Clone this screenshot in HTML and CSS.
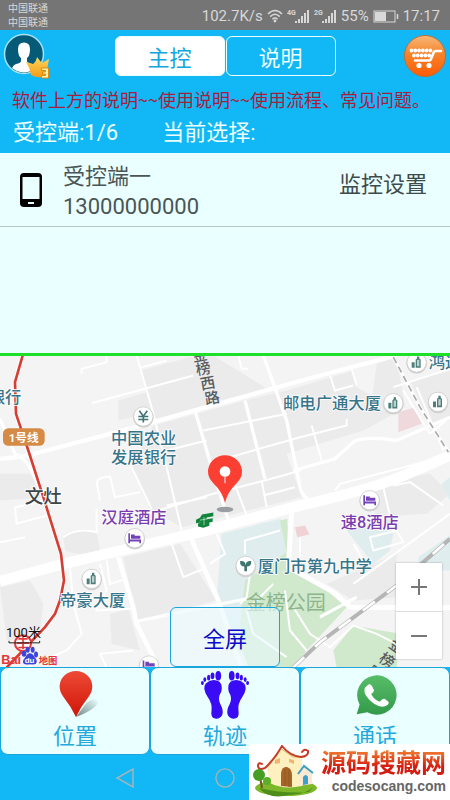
FILE: index.html
```html
<!DOCTYPE html>
<html lang="zh-CN">
<head>
    <meta charset="UTF-8">
    <meta name="viewport" content="width=device-width, initial-scale=1.0">
    <title>主控</title>
    <link rel="stylesheet" href="styles.css">
</head>
<body>
    <div class="status-bar">
        <div class="carriers">
            <span>中国联通</span>
            <span>中国联通</span>
        </div>
        <div class="status-right">
            <span>102.7K/s</span>
            <svg class="wifi" viewBox="0 0 16 14" aria-hidden="true">
                <g fill="none" stroke="#d8d8d8" stroke-width="1.5">
                    <path d="M1 5Q8 -2 15 5"/>
                    <path d="M3.2 7.6Q8 3 12.8 7.6"/>
                    <path d="M5.4 10.2Q8 7.8 10.6 10.2"/>
                </g>
                <circle cx="8" cy="12" r="1.4" fill="#d8d8d8"/>
            </svg>
            <svg class="signal" viewBox="0 0 23 15" aria-hidden="true">
                <text x="0" y="6" class="net-type">4G</text>
                <path fill="#d8d8d8" d="M8 12h2v2H8zM11 10h2v4h-2zM14 7h2v7h-2zM17 4h2v10h-2zM20 1h2v13h-2z"/>
            </svg>
            <svg class="signal" viewBox="0 0 23 15" aria-hidden="true">
                <text x="0" y="6" class="net-type">2G</text>
                <path fill="#d8d8d8" d="M8 12h2v2H8zM11 10h2v4h-2zM14 7h2v7h-2zM17 4h2v10h-2zM20 1h2v13h-2z"/>
            </svg>
            <span>55%</span>
            <svg class="battery" viewBox="0 0 26 13" aria-hidden="true">
                <rect x="1" y="1" width="21" height="11" fill="none" stroke="#d8d8d8"/>
                <rect x="2" y="2" width="11" height="9" fill="#d8d8d8"/>
                <path d="M24.500 4v5" stroke="#d8d8d8" stroke-width="1.500"/>
            </svg>
            <span class="clock">17:17</span>
        </div>
    </div>

    <header class="header">
        <div class="toolbar">
            <button class="icon-btn" aria-label="我的">
                <svg class="avatar" viewBox="0 0 48 48">
                    <defs>
                        <clipPath id="face"><circle cx="21" cy="22" r="18.500"/></clipPath>
                        <linearGradient id="gold" x1="0" y1="0" x2="0" y2="1">
                            <stop offset="0" stop-color="#ffd65a"/>
                            <stop offset="1" stop-color="#f59a16"/>
                        </linearGradient>
                    </defs>
                    <circle cx="21" cy="22" r="19.500" fill="#055a78" stroke="#a5e2f5" stroke-width="1.500"/>
                    <g clip-path="url(#face)" fill="#fff">
                        <path d="M15 17Q15 10.500 21 10.500T27 17Q27 24 24 26V29Q24 31 29 32Q34 34 34 42H8Q8 34 13 32Q18 31 18 29V26Q15 24 15 17Z"/>
                    </g>
                    <path d="M23 30Q27 31 30 32Q33 30 34 25Q37 29 39 31L46 27L43 44Q35 47 28 43Q27 36 23 30Z" fill="url(#gold)"/>
                    <path d="M38.500 36h7v10h-7v-2.500h4v-1.500h-3v-2h3v-1.500h-4z" fill="#fff3b0" stroke="#e08a10"/>
                </svg>
            </button>
            <nav class="tabs">
                <button class="tab active">主控</button>
                <button class="tab">说明</button>
            </nav>
            <button class="icon-btn cart-btn" aria-label="购物车">
                <svg class="cart" viewBox="0 0 44 44">
                    <defs>
                        <linearGradient id="orange" x1="0" y1="0" x2="0" y2="1">
                            <stop offset="0" stop-color="#f8b878"/>
                            <stop offset=".45" stop-color="#f5842a"/>
                            <stop offset="1" stop-color="#ff5a05"/>
                        </linearGradient>
                    </defs>
                    <circle cx="22" cy="22" r="20.500" fill="url(#orange)" stroke="#b8703c"/>
                    <g fill="none" stroke="#fff" stroke-linecap="round">
                        <path d="M38 17H33Q31 17 30.500 19L28 25Q27.500 26.500 26 26.500H12" stroke-width="2.600"/>
                        <path d="M8.500 16.500H28" stroke-width="3.800" stroke-dasharray="0 3.800"/>
                        <path d="M11 21.500H27" stroke-width="3.800" stroke-dasharray="0 3.800"/>
                    </g>
                    <circle cx="16" cy="31.500" r="2.600" fill="#fff"/>
                    <circle cx="26" cy="31.500" r="2.600" fill="#fff"/>
                </svg>
            </button>
        </div>
        <p class="notice">软件上方的说明~~使用说明~~使用流程、常见问题。</p>
        <div class="summary">
            <span>受控端:1/6</span>
            <span>当前选择:</span>
        </div>
    </header>

    <ul class="devices">
        <li class="device">
            <svg class="phone" viewBox="0 0 24 36" aria-hidden="true">
                <rect x="1" y="1" width="22" height="34" rx="4" fill="#000"/>
                <rect x="3.500" y="5" width="17" height="22" fill="#eaffff"/>
                <rect x="9" y="30" width="6" height="2" fill="#eaffff"/>
            </svg>
            <div class="device-info">
                <span>受控端一</span>
                <span>13000000000</span>
            </div>
            <button class="settings">监控设置</button>
        </li>
    </ul>

    <section class="map">
        <svg class="map-canvas" viewBox="0 15 1350 936" preserveAspectRatio="xMidYMid slice">
            <defs>
                <g id="poi">
                    <circle r="31" cy="3" fill="#d2d2d2"/>
                    <circle r="29" fill="#fff" stroke="#c6c6c6" stroke-width="2"/>
                </g>
                <g id="building">
                    <use href="#poi"/>
                    <path fill="#4f7f7b" d="M-15 -1h9v17h-9zM-3 -9l4 -3v-6h7v6l4 3v25H-3z"/>
                    <path fill="#b9d3cf" d="M1 -8h7v19H1z"/>
                </g>
                <g id="hotel">
                    <use href="#poi"/>
                    <path fill="#7343b8" d="M-19 -15h5V4h33v11h-5v-5h-28v5h-5zM-11 -11h11v4h17V2h-28z"/>
                </g>
            </defs>

            <!-- land -->
            <rect y="15" width="1350" height="936" fill="#f4f4f4"/>
            <g fill="#ebebeb">
                <path d="M420 60L590 15H640L810 120L580 185L460 215L440 190L355 210V150L440 125Z"/>
                <path d="M395 350L460 225L735 150L860 120L1060 60L1070 110L1200 180L1090 240L860 310L905 440L545 530L450 475Z"/>
                <path d="M1130 40L1190 20L1215 170L1110 190Z"/>
                <path d="M1230 90L1350 60V200L1290 220Z"/>
                <path d="M370 620L540 580L650 750L410 810Z"/>
                <path d="M190 555Q230 525 290 545L300 600Q240 620 195 600Z"/>
                <path d="M330 790L385 775L420 900L335 880Z"/>
                <path d="M0 710L90 690L130 760L120 850L20 870Z"/>
                <path d="M1090 400L1290 370L1350 430L1280 490L1130 500Z"/>
                <path d="M980 700L1190 610V740L1060 750Z"/>
                <path d="M0 370L90 370L140 440L0 450Z"/>
            </g>
            <path d="M1195 185L1245 170L1265 220L1195 245Z" fill="#f0d9dc"/>
            <path d="M885 530L915 525L928 552L892 560Z" fill="#f0d2d4"/>
            <g fill="#dfedef">
                <path d="M665 550L840 505L870 530L860 610L740 690L720 951H735L650 750Z"/>
                <path d="M1255 620L1350 555V660H1255Z"/>
                <path d="M1040 540L1190 500L1170 600L1120 640Z"/>
                <path d="M1325 400L1350 380V450Z"/>
            </g>
            <g fill="#d0e9cc">
                <path d="M840 510L862 505V650L980 720L1040 770L920 900L880 951H745L715 870L735 690L860 605Z"/>
                <path d="M1000 900L1060 825L1200 850L1190 951H1010Z"/>
            </g>

            <!-- small roads -->
            <g fill="none" stroke="#fff" stroke-width="6">
                <path d="M245 70V55L320 35V15M275 158L580 75M425 50L500 30M410 15L455 170L500 350L545 540M610 240L860 190M500 300L620 270M690 320L900 260L1040 225V205"/>
                <path d="M715 15L725 55L745 55M990 75L1005 120L1060 105M1055 55L1070 105M935 225L965 330"/>
                <path d="M300 450L290 395Q295 380 330 378L345 440L420 425M395 350L455 475M500 465L620 440M440 490L640 430L850 375L900 360"/>
                <path d="M700 390L740 495M785 390L800 470M790 435L885 410M1005 420L1020 400L1290 330M1180 405L1230 395L1330 465"/>
                <path d="M190 560Q230 530 290 545V475M45 470L140 450M45 470L50 520L140 495M0 575L75 560M320 630L330 700L380 685M300 640L320 720L290 780L400 775"/>
                <path d="M515 580L550 680L610 655M650 550L675 610L630 640M210 650L220 760L245 850L200 900L80 951M320 951L300 910L400 900"/>
                <path d="M735 610V570L840 540M750 670L740 740L720 760M820 700L740 780L760 850L860 920M855 720L870 840L920 900M880 770L930 850L990 890L1060 825L1130 850L1190 880"/>
                <path d="M900 560V620M1060 580L1090 630M1110 560L1190 540L1210 575L1120 600ZM1150 410L1180 540M1060 700L1350 490"/>
                <path d="M1210 120L1290 250M1250 110L1330 300M1290 250L1350 200M1180 110L1350 55"/>
            </g>

            <!-- main roads -->
            <g fill="none" stroke="#fff" stroke-linejoin="round">
                <path d="M0 325L70 318L330 250L470 212L600 175L960 75L1190 15" stroke-width="13"/>
                <path d="M0 205L45 310Q85 330 100 370L140 470" stroke-width="9"/>
                <path d="M585 180L635 350L685 510M735 150L795 385M790 15L860 210L900 410Q905 440 940 455" stroke-width="10"/>
                <path d="M880 360L1005 325L1060 275Q1090 255 1190 270L1350 200" stroke-width="10"/>
                <path d="M565 545L655 750L725 951M355 620L400 770L410 820L475 951" stroke-width="14"/>
                <path d="M410 812L740 745M960 800L1070 740" stroke-width="9"/>
                <path d="M875 480L865 650L1000 725L1050 770L1350 772" stroke-width="15"/>
                <path d="M0 692L190 640L600 545L900 465Q1100 420 1200 380L1350 315" stroke-width="32"/>
            </g>

            <!-- railways -->
            <g fill="none">
                <path d="M880 951L960 875L1190 705L1350 565" stroke="#b5b5b5" stroke-width="12"/>
                <path d="M880 951L960 875L1190 705L1350 565" stroke="#fff" stroke-width="8" stroke-dasharray="45 45"/>
                <path d="M1180 20L1260 170L1345 305" stroke="#fff" stroke-width="10"/>
                <path d="M1180 20L1260 170L1345 305" stroke="#aaa" stroke-width="5" stroke-dasharray="20 12"/>
            </g>

            <!-- metro line 1 -->
            <path d="M68 15L45 95L48 190L85 300L130 440L183 610L192 690L180 750L165 790L135 830L20 951" fill="none" stroke="#fff" stroke-width="13"/>
            <path d="M68 15L45 95L48 190L85 300L130 440L183 610L192 690L180 750L165 790L135 830L20 951" fill="none" stroke="#d43f35" stroke-width="8"/>
            <rect x="9" y="233" width="125" height="53" rx="16" fill="#d58a45"/>
            <text x="71" y="273" class="line-name" text-anchor="middle">1号线</text>

            <!-- places -->
            <use href="#poi" x="430" y="198"/>
            <path d="M418 181L430 197L442 181M430 197V216M415 198H445M415 207H445" fill="none" stroke="#3f7672" stroke-width="5"/>
            <use href="#building" x="1250" y="36"/>
            <use href="#building" x="1180" y="158"/>
            <use href="#building" x="1314" y="154"/>
            <use href="#building" x="275" y="685"/>
            <use href="#hotel" x="404" y="563"/>
            <use href="#hotel" x="1109" y="449"/>
            <use href="#hotel" x="447" y="945"/>
            <use href="#poi" x="737" y="646"/>
            <path d="M720 632Q736 630 737 644Q738 630 754 632Q754 648 741 648V662H733V648Q720 648 720 632Z" fill="#3f7672"/>

            <g class="place">
                <text x="-34" y="158">银行</text>
                <text x="333" y="280">中国农业</text>
                <text x="333" y="338">发展银行</text>
                <text x="849" y="175">邮电广通大厦</text>
                <text x="1286" y="53">鸿运</text>
                <text x="180" y="766">帝豪大厦</text>
                <text x="773" y="663">厦门市第九中学</text>
            </g>
            <g class="place hotel-name">
                <text x="304" y="518">汉庭酒店</text>
                <text x="1022" y="532">速8酒店</text>
            </g>
            <text x="74" y="456" class="district">文灶</text>
            <text x="737" y="777" class="park">金榜公园</text>
            <text class="road-name" x="580 590 604 617" y="34 74 118 162" rotate="-10">金榜西路</text>
            <text class="road-name" x="1163 1133 1098" y="888 930 970" rotate="35">金榜路</text>

            <!-- bus stop sign -->
            <path fill="#12853d" d="M606 492L640 486V497L620 501V506L638 503V514L628 516V526L610 532L594 528V519L604 516L588 518V508L600 502Z"/>
            <path d="M600 509L622 505M612 500V524" stroke="#d6ead9" stroke-width="2"/>

            <!-- current position -->
            <ellipse cx="675" cy="477" rx="25" ry="8" fill="#9a9ea3"/>
            <path d="M675 457Q668 425 640 398Q624 382 624 364A51 50 0 0 1 726 364Q726 382 710 398Q682 425 675 457Z" fill="#fb4033"/>
            <circle cx="675" cy="363" r="16" fill="#fff"/>
            <path d="M675 378V398" stroke="#c6cfd2" stroke-width="4"/>

            <!-- scale and provider mark -->
            <circle cx="69" cy="878" r="24" fill="#fff" stroke="#e3383c" stroke-width="6"/>
            <path d="M55 865H83M50 878H88M55 891H83M69 860V896" stroke="#e3383c" stroke-width="5"/>
            <path d="M27 871V877H119V871" fill="none" stroke="#222" stroke-width="3"/>
            <text x="18" y="859" class="scale">100米</text>
            <text x="4" y="941" class="brand">Bai</text>
            <g fill="#3b45dc">
                <ellipse cx="72" cy="910" rx="7" ry="9"/>
                <ellipse cx="83" cy="898" rx="6" ry="9"/>
                <ellipse cx="98" cy="898" rx="6" ry="9"/>
                <ellipse cx="108" cy="912" rx="6" ry="9"/>
                <path d="M90 908Q98 908 104 920Q114 930 108 940Q102 944 90 941Q76 944 70 938Q66 930 76 920Q82 908 90 908Z"/>
            </g>
            <text x="74" y="938" class="brand-du">du</text>
            <text x="116" y="939" class="brand-map">地图</text>
        </svg>

        <button class="fullscreen">全屏</button>
        <div class="zoom">
            <button aria-label="放大">
                <svg viewBox="0 0 18 18"><path d="M9 1V17M1 9H17" stroke="#777" stroke-width="2"/></svg>
            </button>
            <button aria-label="缩小">
                <svg viewBox="0 0 18 18"><path d="M1 9H17" stroke="#777" stroke-width="2"/></svg>
            </button>
        </div>
    </section>

    <div class="actions">
        <button class="action">
            <svg viewBox="0 0 52 52" aria-hidden="true">
                <defs>
                    <linearGradient id="red" x1="0" y1="0" x2="0" y2="1">
                        <stop offset="0" stop-color="#ee4a36"/>
                        <stop offset="1" stop-color="#cf1508"/>
                    </linearGradient>
                    <linearGradient id="shade" x1="0" y1="1" x2="1" y2="0">
                        <stop offset="0" stop-color="#6f8585"/>
                        <stop offset="1" stop-color="#eaffff"/>
                    </linearGradient>
                </defs>
                <path d="M27 49L38 34Q46 28 50 32Q50 40 27 49Z" fill="url(#shade)"/>
                <path d="M27 49Q22 38 14 28Q10 23 10 17A17 16 0 0 1 44 17Q44 23 40 28Q32 38 27 49Z" fill="url(#red)"/>
            </svg>
            <span>位置</span>
        </button>
        <button class="action">
            <svg viewBox="0 0 52 52" aria-hidden="true">
                <g id="foot" fill="#3a0cf5">
                    <path d="M6 14Q13 8 20 12Q24 16 22 23Q18 29 21 35Q25 42 23 47Q20 52 14 50Q11 48 12 42Q13 35 8 28Q2 19 6 14Z"/>
                    <ellipse cx="19" cy="6" rx="3" ry="5"/>
                    <ellipse cx="13" cy="6" rx="2" ry="3.500"/>
                    <ellipse cx="9" cy="8" rx="1.700" ry="3"/>
                    <ellipse cx="5" cy="10" rx="1.500" ry="2.500"/>
                    <ellipse cx="2.500" cy="13.500" rx="1.500" ry="2"/>
                </g>
                <use href="#foot" transform="translate(52 0) scale(-1 1)"/>
            </svg>
            <span>轨迹</span>
        </button>
        <button class="action">
            <svg viewBox="0 0 52 52" aria-hidden="true">
                <defs>
                    <linearGradient id="green" x1="0" y1="0" x2="0" y2="1">
                        <stop offset="0" stop-color="#58bd68"/>
                        <stop offset="1" stop-color="#339a4b"/>
                    </linearGradient>
                </defs>
                <path d="M10 36A20.500 20.500 0 1 1 18 44L7 46Z" fill="url(#green)"/>
                <path d="M18 16Q21 13 23 17L25 21Q25 23 22 25Q25 31 31 33Q34 29 36 30L40 33Q41 35 38 37Q33 40 25 35Q14 27 15 20Q15 18 18 16Z" fill="#fff"/>
            </svg>
            <span>通话</span>
        </button>
    </div>

    <footer class="nav-bar">
        <button aria-label="返回">
            <svg viewBox="0 0 20 22"><path d="M18 2V20L2 11Z" fill="none" stroke="#a3b5b8" stroke-width="1.500"/></svg>
        </button>
        <button aria-label="主页">
            <svg viewBox="0 0 22 22"><circle cx="11" cy="11" r="10" fill="none" stroke="#a3b5b8" stroke-width="1.500"/></svg>
        </button>
        <button aria-label="最近任务">
            <svg viewBox="0 0 22 22"><rect x="3" y="3" width="16" height="16" fill="none" stroke="#a3b5b8" stroke-width="1.500"/></svg>
        </button>
    </footer>

    <a class="site-badge" href="#">
        <svg class="house" viewBox="0 0 70 56" aria-hidden="true">
            <ellipse cx="37" cy="44" rx="31" ry="8" fill="#7cb829"/>
            <path d="M10 44Q20 56 40 51Q60 50 67 40L60 48Q36 50 10 44Z" fill="#4f8d1a"/>
            <path d="M17 21L31 5L53 13V42Q34 46 21 39Z" fill="#fff0c0"/>
            <path d="M31 4L44 13L56 13" fill="none" stroke="#dcb46a"/>
            <path d="M33 2Q25 16 16 24Q9 27 9 21Q10 18 13 20M33 2Q41 12 52 13Q60 12 59 7Q56 4 53 8" fill="none" stroke="#c93a26" stroke-width="2" stroke-linecap="round"/>
            <path d="M32 42V29Q33 22 38 23Q43 25 43 31V43Z" fill="#a76528"/>
            <path d="M36 42V25M40 43V25" stroke="#8a5a26"/>
            <path d="M26 16l5 -2v5l-5 1zM40 15l5 1v4l-5 -2z" fill="#f3b375"/>
            <path d="M50 42V29L56 23L63 29V40Z" fill="#fde8d1"/>
            <path d="M49 30L55 22L64 29" fill="none" stroke="#3d9ec6" stroke-width="2"/>
            <path d="M54 41V33Q57 29 59 33V40Z" fill="#3aa0cc"/>
            <path d="M11 33L13 44" stroke="#7a5020" stroke-width="2"/>
            <circle cx="10" cy="31" r="6" fill="#469d23"/>
            <circle cx="18" cy="37" r="4" fill="#5aae2a"/>
        </svg>
        <span class="badge-text">
            <strong>源码搜藏网</strong>
            <small>codesocang.com</small>
        </span>
    </a>
</body>
</html>
```
FILE: styles.css
```css
* {
    box-sizing: border-box;
}
body {
    font-family: Roboto, "Noto Sans CJK SC", sans-serif;
    background-color: #12b7f5;
    margin: 0;
    min-height: 100vh;
    display: flex;
    flex-direction: column;
    overflow-x: hidden;
    position: relative;
}
button {
    font-family: inherit;
    padding: 0;
    border: none;
    background: none;
    cursor: pointer;
}
svg {
    display: block;
}

/* phone status bar */
.status-bar {
    display: flex;
    justify-content: space-between;
    align-items: center;
    height: 30px;
    padding: 2px 10px 0 8px;
    background-color: #757575;
    color: #d8d8d8;
}
.carriers {
    display: flex;
    flex-direction: column;
    font-size: 10px;
    line-height: 14px;
}
.status-right {
    display: flex;
    align-items: center;
    gap: 4px;
    font-size: 15px;
    line-height: 28px;
}
.wifi {
    width: 16px;
    height: 14px;
}
.signal {
    width: 23px;
    height: 15px;
}
.net-type {
    font-size: 7px;
    font-weight: bold;
    fill: #d8d8d8;
}
.battery {
    width: 26px;
    height: 13px;
}

/* header */
.header {
    background-color: #12b7f5;
    color: #eaffff;
    padding-bottom: 4px;
}
.toolbar {
    display: grid;
    grid-template-columns: 1fr auto 1fr;
    align-items: center;
    height: 52px;
    padding: 0 3px;
}
.icon-btn {
    justify-self: start;
}
.cart-btn {
    justify-self: end;
}
.avatar {
    width: 48px;
    height: 48px;
}
.cart {
    width: 44px;
    height: 44px;
}
.tabs {
    display: flex;
    gap: 1px;
}
.tab {
    width: 110px;
    height: 40px;
    border: 1px solid #eaffff;
    border-radius: 6px;
    color: #eaffff;
    font-size: 22px;
}
.tab.active {
    background-color: #fff;
    color: #12a5de;
}
.notice {
    margin: 0;
    padding-left: 12px;
    font-family: "Noto Sans CJK SC", sans-serif;
    font-size: 18px;
    line-height: 34px;
    white-space: nowrap;
    overflow: hidden;
    color: #a81c3c;
}
.summary {
    display: flex;
    gap: 44px;
    padding-left: 13px;
    font-size: 22px;
    line-height: 33px;
}

/* device list */
.devices {
    list-style: none;
    margin: 0;
    padding: 0;
    min-height: 203px;
    background-color: #eaffff;
    border-bottom: 3px solid #1de02a;
    color: #4a5555;
}
.device {
    display: flex;
    align-items: center;
    height: 74px;
    padding: 0 23px 0 19px;
    border-bottom: 1px solid #b5c8c8;
}
.phone {
    width: 24px;
    height: 36px;
}
.device-info {
    display: flex;
    flex-direction: column;
    flex: 1;
    margin-left: 20px;
    padding-top: 4px;
    font-size: 22px;
    line-height: 30px;
}
.settings {
    color: #3f4a4a;
    font-size: 22px;
    line-height: 30px;
    padding-bottom: 10px;
}

/* map */
.map {
    position: relative;
    flex: 1;
    min-height: 300px;
    overflow: hidden;
}
.map-canvas {
    position: absolute;
    width: 100%;
    height: 100%;
}
.place {
    font-size: 49px;
    font-weight: 500;
    fill: #37758a;
    stroke: #fff;
    stroke-width: 5px;
    paint-order: stroke;
}
.hotel-name {
    fill: #7a3db0;
}
.line-name {
    font-size: 35px;
    font-weight: bold;
    fill: #fff;
}
.district {
    font-size: 56px;
    font-weight: 500;
    fill: #3f4547;
    stroke: #fff;
    stroke-width: 5px;
    paint-order: stroke;
}
.park {
    font-size: 60px;
    fill: #8db58c;
}
.road-name {
    font-size: 45px;
    font-weight: 500;
    fill: #565b60;
}
.scale {
    font-size: 39px;
    fill: #111;
}
.brand {
    font-family: "Liberation Sans", sans-serif;
    font-size: 38px;
    font-weight: bold;
    fill: #e3383c;
}
.brand-du {
    font-family: "Liberation Sans", sans-serif;
    font-size: 24px;
    font-weight: bold;
    fill: #fff;
}
.brand-map {
    font-size: 28px;
    font-weight: bold;
    fill: #e3383c;
}
.fullscreen {
    position: absolute;
    left: 50%;
    bottom: 0;
    width: 110px;
    height: 60px;
    margin-left: -55px;
    border: 1px solid #1aa5dc;
    border-radius: 6px;
    background-color: rgba(234, 250, 255, 0.6);
    color: #0a0ac8;
    font-size: 22px;
}
.zoom {
    position: absolute;
    right: 8px;
    bottom: 8px;
    display: flex;
    flex-direction: column;
    width: 46px;
    background-color: #fff;
    box-shadow: 0 0 2px rgba(0, 0, 0, 0.3);
}
.zoom button {
    display: flex;
    justify-content: center;
    align-items: center;
    height: 48px;
}
.zoom button + button {
    border-top: 1px solid #ddd;
}
.zoom svg {
    width: 18px;
    height: 18px;
}

/* bottom buttons */
.actions {
    display: grid;
    grid-template-columns: repeat(3, 1fr);
}
.action {
    display: flex;
    flex-direction: column;
    align-items: center;
    height: 88px;
    padding-top: 2px;
    border: 1px solid #1aa5dc;
    border-radius: 8px;
    background-color: #eaffff;
    color: #25a8dc;
    font-size: 22px;
    line-height: 34px;
}
.action svg {
    width: 52px;
    height: 52px;
}
.nav-bar {
    display: flex;
    justify-content: center;
    align-items: center;
    gap: 80px;
    height: 45px;
}
.nav-bar svg {
    width: 20px;
    height: 22px;
}

/* site badge over the bottom corner */
.site-badge {
    position: absolute;
    right: 0;
    bottom: 0;
    display: flex;
    gap: 2px;
    width: 201px;
    height: 56px;
    background-color: #fff;
    text-decoration: none;
}
.house {
    width: 70px;
    height: 56px;
}
.badge-text {
    display: flex;
    flex-direction: column;
    padding-top: 6px;
}
.badge-text strong {
    font-size: 25px;
    font-weight: bold;
    line-height: 28px;
    white-space: nowrap;
    color: transparent;
    background: linear-gradient(#f08030, #d41c10 60%);
    background-clip: text;
    -webkit-background-clip: text;
}
.badge-text small {
    font-family: "Liberation Sans", sans-serif;
    font-size: 14px;
    font-weight: bold;
    line-height: 16px;
    text-align: right;
    color: #666;
}
```
